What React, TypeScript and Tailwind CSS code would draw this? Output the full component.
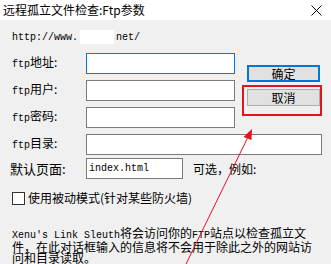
import React from "react";

const mono = "font-['Liberation_Mono','Noto_Sans_CJK_SC',monospace]";
const cjk = "font-['Noto_Sans_CJK_SC',sans-serif]";

function A({ children }: { children: React.ReactNode }) {
  return <span className={`${mono} text-[10px]`}>{children}</span>;
}

function Row({ label, width, focused, children }: { label: React.ReactNode; width: string; focused?: boolean; children?: React.ReactNode }) {
  return (
    <div className="flex items-center h-[21px]">
      <div className="w-[74px] text-[12px] leading-[14px] text-black">{label}</div>
      <div className={`${width} h-[21px] bg-white border ${focused ? "border-[#0078d7]" : "border-[#7a7a7a]"}`} />
      {children}
    </div>
  );
}

export default function App() {
  return (
    <div className={`w-[331px] h-[264px] bg-[#f0f0f0] relative overflow-hidden ${cjk} text-black`}>
      <div className="h-[20px] bg-white flex items-center justify-between pl-[3px] pr-[9px]">
        <span className="text-[12px] leading-[14px]">远程孤立文件检查:Ftp参数</span>
        <svg width="11" height="11" viewBox="0 0 11 11">
          <path d="M0.5 0.5 L10.5 10.5 M10.5 0.5 L0.5 10.5" stroke="#000" strokeWidth="1" />
        </svg>
      </div>
      <div className="pl-[12px] pt-[10px]">
        <div className="h-[14px] flex items-center">
          <A>http://www.</A>
          <span className="inline-block w-[34px] h-[14px] bg-white mx-[2px]" />
          <A>net/</A>
        </div>
        <div className="mt-[9px] flex">
          <div className="flex flex-col gap-[6px]">
            <Row label={<><A>ftp</A>地址:</>} width="w-[149px]" focused />
            <Row label={<><A>ftp</A>用户:</>} width="w-[149px]" />
            <Row label={<><A>ftp</A>密码:</>} width="w-[149px]" />
          </div>
          <div className="ml-[12px] pt-[12px] flex flex-col gap-[7px]">
            <button className="w-[73px] h-[17px] bg-[#e1e1e1] border-2 border-[#0078d7] text-[12px] leading-[13px] flex items-center justify-center">
              确定
            </button>
            <div className="relative">
              <button className="w-[73px] h-[17px] bg-[#e1e1e1] border border-[#adadad] text-[12px] leading-[13px] flex items-center justify-center">
                取消
              </button>
              <div className="absolute left-[-5px] top-[-4px] w-[80px] h-[31px] border-2 border-[#e3141b]" />
            </div>
          </div>
        </div>
        <div className="mt-[6px]">
          <Row label={<><A>ftp</A>目录:</>} width="w-[236px]" />
        </div>
        <div className="mt-[3px] flex items-center h-[21px]">
          <div className="w-[74px] -ml-[2px] pl-0 text-[13px] leading-[14px]">默认页面:</div>
          <div className="w-[97px] h-[21px] ml-[2px] bg-white border border-[#7a7a7a] flex items-center pl-[2px]">
            <A>index.html</A>
          </div>
          <span className="ml-[10px] text-[12px] leading-[14px]">可选，例如:</span>
        </div>
        <div className="mt-[12px] flex items-center h-[14px]">
          <div className="w-[13px] h-[13px] bg-white border border-[#333]" />
          <span className="ml-[3px] text-[12px] leading-[14px]">使用被动模式(针对某些防火墙)</span>
        </div>
        <div className="mt-[22px] text-[12px] leading-[11px] whitespace-nowrap">
          <div><A>Xenu's Link Sleuth</A>将会访问你的<A>FTP</A>站点以检查孤立文</div>
          <div>件，在此对话框输入的信息将不会用于除此之外的网站访</div>
          <div>问和目录读取。</div>
        </div>
      </div>
      <svg className="absolute left-0 top-0 pointer-events-none" width="331" height="264" viewBox="0 0 331 264">
        <line x1="186" y1="264" x2="248" y2="137" stroke="#e3141b" strokeWidth="1" />
        <polygon points="252,129 243.5,137 251.5,140" fill="#e3141b" />
      </svg>
    </div>
  );
}
